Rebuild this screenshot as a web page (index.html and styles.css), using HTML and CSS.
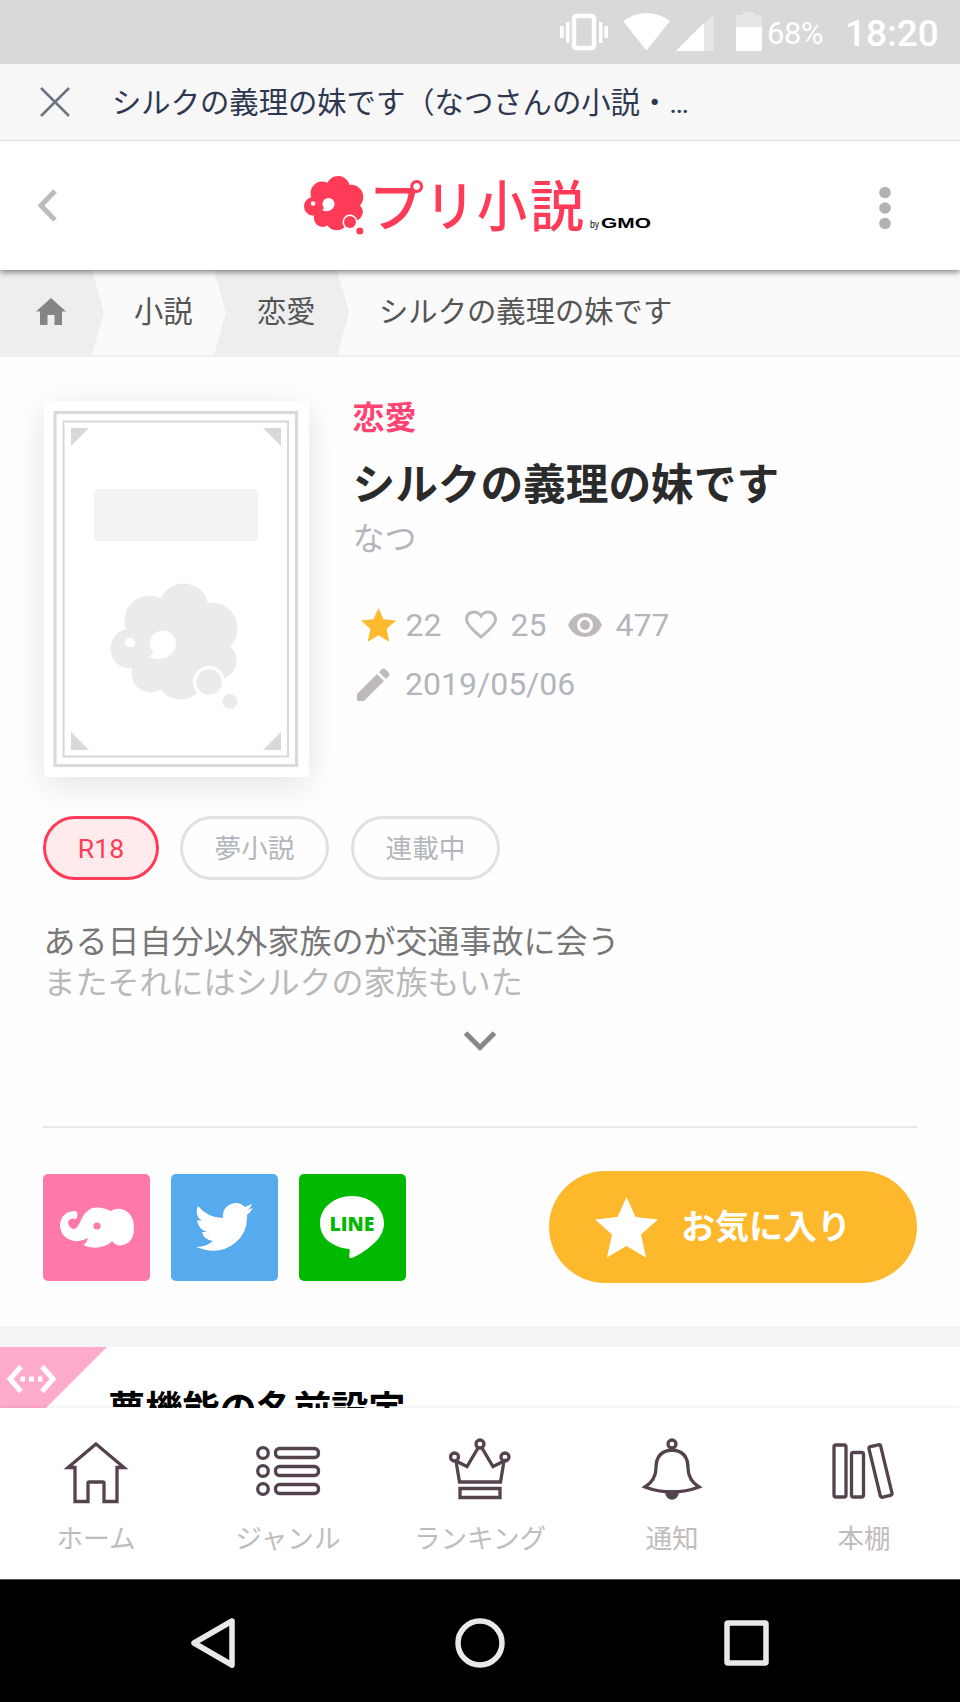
FILE: index.html
```html
<!DOCTYPE html>
<html lang="ja">
<head>
<meta charset="utf-8">
<title>シルクの義理の妹です</title>
<link rel="stylesheet" href="styles.css">
</head>
<body>
<svg class="defs" width="0" height="0">
  <defs>
    <g id="cloud">
      <circle cx="20" cy="65" r="20"/><circle cx="39" cy="37" r="25"/><circle cx="73" cy="25" r="25"/>
      <circle cx="101" cy="45" r="26"/><circle cx="107" cy="77" r="19"/><circle cx="70" cy="92" r="24"/>
      <circle cx="40" cy="90" r="19"/><circle cx="66" cy="62" r="40"/>
      <g fill="#fff"><circle cx="19.500" cy="59" r="4.800"/><circle cx="52.500" cy="60" r="13"/><path d="M41 66Q45 70 38.500 73Q50 79 60 71L56 58z"/><circle cx="98.500" cy="98.500" r="16"/></g>
      <circle cx="98.500" cy="98.500" r="12.800"/><circle cx="119.500" cy="118" r="7.500"/>
    </g>
    <path id="star" d="M31.500 0L40.500 20L63 22.500L46 37.500L51 60.500L31.500 49L12 60.500L17 37.500L0 22.500L22.500 20z"/>
  </defs>
</svg>
<div class="screen">
  <div class="status">
    <svg width="175" height="64" viewBox="0 0 175 64" fill="#fff">
      <rect x="14" y="16" width="20" height="32" rx="2" fill="none" stroke="#fff" stroke-width="4.500"/>
      <path d="M0 26h3.500v12H0zM6 22h3.500v21H6zM39 22h3.500v21H39zM44.500 26H48v12h-3.500z"/>
      <path d="M63 21Q86.500 5 110 21L86.500 50.500z"/>
      <path d="M116 51L154 14V51z" opacity=".35"/><path d="M116 51L144 23V51z"/>
    </svg>
    <svg class="battery" width="26" height="64" viewBox="0 0 26 64" fill="#fff"><path d="M0 27V15h7v-3h12v3h7v12z" opacity=".35"/><path d="M0 27h26v24H0z"/></svg>
    <span class="percent">68%</span><span class="clock">18:20</span>
  </div>
  <div class="titlebar">
    <svg width="30" height="30" viewBox="0 0 30 30" fill="none" stroke="#6d7585" stroke-width="2.600"><path d="M1 1L29 29M29 1L1 29"/></svg>
    <span>シルクの義理の妹です（なつさんの小説・…</span>
  </div>
  <header class="header">
    <svg class="back" width="21" height="34" viewBox="0 0 21 34" fill="none" stroke="#bfbaba" stroke-width="5"><path d="M19 2L5 16.500L19 31"/></svg>
    <svg class="logo" width="350" height="64" viewBox="0 0 350 64">
      <g fill="#ff3b57"><use href="#cloud" transform="translate(0 1) scale(.467)"/></g>
      <g class="logo-name"><text x="65" y="50.500">プ</text><text x="121" y="50.500" textLength="50" lengthAdjust="spacingAndGlyphs">リ</text><text x="173" y="50.500" textLength="50" lengthAdjust="spacingAndGlyphs">小</text><text x="226" y="50.500" textLength="54" lengthAdjust="spacingAndGlyphs">説</text></g>
      <text class="logo-by" x="286" y="53" textLength="9" lengthAdjust="spacingAndGlyphs">by</text>
      <text class="logo-gmo" x="297" y="52.500" textLength="50" lengthAdjust="spacingAndGlyphs">GMO</text>
    </svg>
    <svg class="more" width="14" height="46" viewBox="0 0 14 46" fill="#b3b1b1"><circle cx="7" cy="6.500" r="5.800"/><circle cx="7" cy="22" r="5.800"/><circle cx="7" cy="37.500" r="5.800"/></svg>
  </header>
  <nav class="crumbs">
    <div class="crumb crumb-home"><svg width="30" height="27" viewBox="0 0 30 27" fill="#858585"><path d="M15 0L30 13.500H26V27H18.500V17h-7V27H4V13.500H0z"/></svg></div>
    <div class="crumb crumb-light">小説</div>
    <div class="crumb crumb-dark">恋愛</div>
    <div class="crumb crumb-last">シルクの義理の妹です</div>
  </nav>
  <main>
    <section class="book">
      <svg class="cover" width="265" height="376" viewBox="0 0 265 376">
        <g fill="none" stroke="#dadada"><rect x="11" y="11.500" width="241.500" height="353" stroke-width="3.200"/><rect x="19.500" y="20.500" width="224.500" height="335" stroke-width="2.200"/></g>
        <path fill="#d8d8d8" d="M27 27h18L27 45zM237 27h-18l18 18zM27 349h18L27 331zM237 349h-18l18-18z"/>
        <rect x="50" y="88" width="164" height="52" rx="4" fill="#f3f3f3"/>
        <g fill="#ebebeb"><use href="#cloud" transform="translate(66.500 182.500)"/></g>
      </svg>
      <div class="info">
        <div class="genre">恋愛</div>
        <h1>シルクの義理の妹です</h1>
        <div class="author">なつ</div>
        <div class="stats">
          <svg class="i-star" width="35" height="34" viewBox="0 0 63 61" fill="#ffb92d"><use href="#star"/></svg><span class="n-star">22</span>
          <svg class="i-heart" width="32" height="30" viewBox="0 0 32 30" fill="none" stroke="#c0b9b9" stroke-width="3"><path d="M16 27Q1.500 15 1.500 9.500Q2 2 9 2Q13.500 2 16 6Q18.500 2 23 2Q30 2 30.500 9.500Q30.500 15 16 27z"/></svg><span class="n-heart">25</span>
          <svg class="i-eye" width="34" height="24" viewBox="0 0 34 24"><path fill="#c0b9b9" d="M0 12Q5 0 17 0T34 12Q29 24 17 24T0 12z"/><circle cx="17" cy="12" r="6.500" fill="#c0b9b9" stroke="#fff" stroke-width="3"/></svg><span>477</span>
        </div>
        <div class="updated">
          <svg width="33" height="33" viewBox="0 0 33 33" fill="#c0b9b9"><path d="M0 33V26L20 6L27 13L7 33zM22 4L25 1Q26.500 0 28 1L32 5Q33 6.500 32 8L29 11z"/></svg><span>2019/05/06</span>
        </div>
      </div>
    </section>
    <div class="tags"><span class="tag adult">R18</span><span class="tag">夢小説</span><span class="tag">連載中</span></div>
    <p class="desc"><span>ある日自分以外家族のが交通事故に会う</span><br><span class="faded">またそれにはシルクの家族もいた</span></p>
    <div class="expand"><svg width="34" height="22" viewBox="0 0 34 22" fill="none" stroke="#8b8585" stroke-width="5"><path d="M2.500 3L17 17.500L31.500 3"/></svg></div>
    <div class="actions">
      <div class="share pink"><svg width="76" height="42" viewBox="0 0 76 42" fill="#fff"><path d="M17 4Q3 4 1 17Q1 31 15 34Q22 35 29 31Q28 36 24 38Q35 43 45 39Q51 37 53 34Q58 41 67 37Q75 33 75 22Q75 5 62 2Q56 1 52 4Q42-1 33 1Q26 4 22 13Q18 23 14 22Q9 20 9 15Q11 10 17 12Q20 7 17 4z"/><circle cx="38" cy="19" r="3.600" fill="#ff78aa"/></svg></div>
      <div class="share blue"><svg width="58" height="50" viewBox="0 0 58 50" fill="#fff"><path d="M58 5Q55 10 52 12Q53 29 40 40Q24 53 1 44Q11 44 18 38Q9 37 7 29H12Q3 26 2 17L7 18Q-1 12 3 3Q13 15 28 15Q27 6 34 2Q43-3 50 4L57 1Q55 6 52 7z"/></svg></div>
      <div class="share green"><svg width="64" height="63" viewBox="0 0 64 63"><path fill="#fff" d="M32 0C14 0 0 12 0 27C0 42 12 51 29 53C31 54 28 60 30 62Q32 63 43 56C56 47 64 39 64 27C64 12 50 0 32 0z"/><text class="line" x="32" y="34.500" text-anchor="middle" textLength="45" lengthAdjust="spacingAndGlyphs">LINE</text></svg></div>
      <div class="favorite"><svg width="63" height="61" viewBox="0 0 63 61" fill="#fff"><use href="#star"/></svg><span>お気に入り</span></div>
    </div>
    <section class="settings">
      <svg class="ribbon" width="107" height="61" viewBox="0 0 107 61"><path fill="#ffabcc" d="M0 0H107L46 61H0z"/><path fill="none" stroke="#fff" stroke-width="5" d="M21 19.500L10 32L21 44.500M42 19.500L53 32L42 44.500"/><path fill="#fff" d="M20.500 29.500h4.500v5h-4.500zM29 29.500h5v5h-5zM38 29.500h4.500v5H38z"/></svg>
      <h2>夢機能の名前設定</h2>
    </section>
  </main>
  <nav class="tabs">
    <div class="tab"><svg width="72" height="72" viewBox="0 0 72 72"><path d="M36 10L64 33.500H57V67.500H44V49Q44 48 43 48H29Q28 48 28 49V67.500H15V33.500H8z"/></svg><span>ホーム</span></div>
    <div class="tab"><svg width="72" height="72" viewBox="0 0 72 72"><circle cx="11" cy="19" r="5.300"/><circle cx="11" cy="37" r="5.300"/><circle cx="11" cy="55" r="5.300"/><rect x="23.500" y="14.500" width="43" height="9" rx="4"/><rect x="23.500" y="32.500" width="43" height="9" rx="4"/><rect x="23.500" y="50.500" width="43" height="9" rx="4"/></svg><span>ジャンル</span></div>
    <div class="tab"><svg width="72" height="72" viewBox="0 0 72 72"><circle cx="36" cy="10" r="4"/><circle cx="10.500" cy="23" r="4"/><circle cx="61" cy="23" r="4"/><path d="M12 27L15.500 48H56.500L60 27L49 32.500L38 14M12 27L23 32.500L34 14M16 54.500h40v9H16z"/></svg><span>ランキング</span></div>
    <div class="tab"><svg width="72" height="72" viewBox="0 0 72 72"><circle cx="36" cy="10" r="4"/><path d="M36 16Q20 17 20 34Q20 46 9 53Q22 58 36 58T63 53Q52 46 52 34Q52 17 36 16z"/><path class="solid" d="M30.500 58h11Q40 64 36 64T30.500 58z"/></svg><span>通知</span></div>
    <div class="tab"><svg width="72" height="72" viewBox="0 0 72 72"><rect x="6" y="11" width="12" height="52" rx="2"/><rect x="23.500" y="18.500" width="12" height="44.500" rx="2"/><rect x="46.500" y="11" width="12" height="52" rx="2" transform="rotate(-13.500 52.500 37)"/></svg><span>本棚</span></div>
  </nav>
  <div class="android">
    <svg width="44" height="52" viewBox="0 0 44 52"><path d="M41 4L3 26L41 48z"/></svg>
    <svg width="52" height="52" viewBox="0 0 52 52"><circle cx="26" cy="26" r="22"/></svg>
    <svg width="46" height="52" viewBox="0 0 46 52"><rect x="3" y="6" width="39" height="40" rx="1"/></svg>
  </div>
</div>
</body>
</html>
```

FILE: styles.css
```css
* { box-sizing: border-box; }
body { margin: 0; background: #fefefe; font-family: "Roboto", "Noto Sans CJK JP", sans-serif; }
svg { display: block; flex: none; }
.defs { position: absolute; }
.screen { width: 960px; height: 1702px; display: flex; flex-direction: column; overflow: hidden; }
.screen > * { flex: none; }

.status { height: 64px; background: #d9d9d9; color: #fff; display: flex; align-items: center; padding-left: 560px; white-space: nowrap; }
.battery { margin-left: 1px; }
.percent { font-size: 31px; margin-left: 5px; width: 78px; letter-spacing: -.5px; padding-top: 3px; }
.clock { font-size: 37px; font-weight: 500; padding-top: 3px; }

.titlebar { height: 77px; background: #f7f7f7; border-bottom: 1px solid #dedede; display: flex; align-items: center; padding-left: 40px; gap: 42px; font-size: 29.330px; color: #2e3850; white-space: nowrap; z-index: 2; }
.titlebar span { padding-bottom: 4px; }

.header { height: 129px; background: #fff; box-shadow: 0 2px 6px rgba(0,0,0,.5); display: flex; align-items: flex-start; z-index: 1; }
.back { margin: 48px 0 0 36px; }
.logo { margin: 34px 0 0 247px; overflow: visible; }
.logo-name { fill: #ff3b57; font: 500 55px "Noto Sans CJK JP", sans-serif; }
.logo-by { font: 400 10px "Liberation Sans", sans-serif; }
.logo-gmo { font: 700 15px "Liberation Sans", sans-serif; }
.more { margin: 45px 0 0 224px; }

.crumbs { height: 87px; background: #fafafa; border-bottom: 2px solid #f0f0f0; display: flex; font-size: 29.330px; color: #555; white-space: nowrap; }
.crumb { display: flex; align-items: center; padding-bottom: 8px; height: 85px; }
.crumb-home, .crumb-dark { background: #eee; }
.crumb-home { width: 104px; padding: 0 0 3px 36px; clip-path: polygon(0 0, 92px 0, 104px 50%, 92px 100%, 0 100%); }
.crumb-light { width: 110px; padding-left: 30px; }
.crumb-dark { width: 135px; padding-left: 43px; clip-path: polygon(0 0, 123px 0, 135px 50%, 123px 100%, 0 100%, 12px 50%); }
.crumb-last { padding-left: 30px; }

main { height: 1051px; padding-top: 44px; overflow: hidden; background: #fefefe; }
.book { display: flex; padding-left: 43.500px; gap: 44px; height: 415px; }
.cover { background: #fff; box-shadow: 0 8px 32px rgba(0,0,0,.11); }
.info { display: flex; flex-direction: column; white-space: nowrap; }
.genre { font-size: 32px; line-height: 40px; font-weight: 700; color: #ff4372; margin-top: -3px; }
h1 { margin: 17px 0 0; font-size: 42.670px; line-height: 60px; font-weight: 700; color: #2b2b2b; }
.author { margin-top: 2px; font-size: 32px; line-height: 44px; color: #b2b6bc; }
.stats, .updated { display: flex; align-items: center; font-size: 32px; line-height: 40px; color: #b2b6bc; height: 40px; }
.stats { margin-top: 44px; padding-left: 8px; }
.n-star { margin: 0 24px 0 10px; }
.n-heart { margin: 0 22px 0 13px; }
.i-eye { margin-right: 13px; }
.updated { margin-top: 19px; padding-left: 4px; gap: 15.500px; }

.tags { display: flex; gap: 22px; padding-left: 43px; }
.tag { height: 64px; width: 149px; border: 3px solid #e1e1e1; border-radius: 32px; display: flex; align-items: center; justify-content: center; font-size: 26.600px; color: #b2b6bc; padding-bottom: 3px; }
.tag.adult { width: 116px; color: #ff3b57; border-color: #ff3b57; background: #ffebec; margin-right: -1px; padding-bottom: 0; }

.desc { margin: 42px 0 0 43.500px; font-size: 32px; line-height: 41px; color: #777; white-space: nowrap; }
.faded { color: #b9b9b9; }
.expand { height: 124px; margin: 0 43px; border-bottom: 2px solid #e8e8e8; display: flex; justify-content: center; padding-top: 26px; }

.actions { height: 198px; padding: 0 43px; display: flex; align-items: center; gap: 21px; }
.share { width: 107px; height: 107px; border-radius: 5px; display: flex; align-items: center; justify-content: center; }
.pink { background: #ff78aa; }
.pink svg { margin-top: 2px; }
.blue { background: #56aaee; }
.blue svg { margin: 1px 2px 0 0; }
.green { background: #00b900; }
.green svg { margin-right: 1px; }
.line { fill: #00b900; font: 800 20px "Open Sans", sans-serif; }
.favorite { margin-left: auto; width: 368px; height: 112px; border-radius: 56px; background: #fdb82c; color: #fff; display: flex; align-items: center; padding-left: 46px; gap: 23px; font-size: 34px; font-weight: 700; white-space: nowrap; }
.favorite span { padding-bottom: 6px; }

.settings { border-top: 21px solid #f4f4f4; display: flex; background: #fff; }
h2 { margin: 36px 0 0 1px; font-size: 37.200px; line-height: 54px; font-weight: 700; color: #000; white-space: nowrap; }

.tabs { height: 172px; background: #fff; box-shadow: 0 -1px 4px rgba(0,0,0,.08); z-index: 1; display: grid; grid-template-columns: repeat(5, 192px); }
.tab { display: flex; flex-direction: column; align-items: center; padding-top: 25px; font-size: 26.600px; line-height: 38px; color: #c1bcbc; white-space: nowrap; }
.tab svg { fill: none; stroke: #54434f; stroke-width: 3.300; margin-top: 1px; }
.tab span { margin-top: 14px; }
.tab .solid { fill: #54434f; }

.android { height: 123px; margin-top: -1px; border-top: 1px solid #555; background: #000; display: flex; padding: 37px 190px 0 191px; justify-content: space-between; z-index: 2; }
.android svg { fill: none; stroke: #e9e9e9; stroke-width: 5.500; stroke-linejoin: round; }
```
